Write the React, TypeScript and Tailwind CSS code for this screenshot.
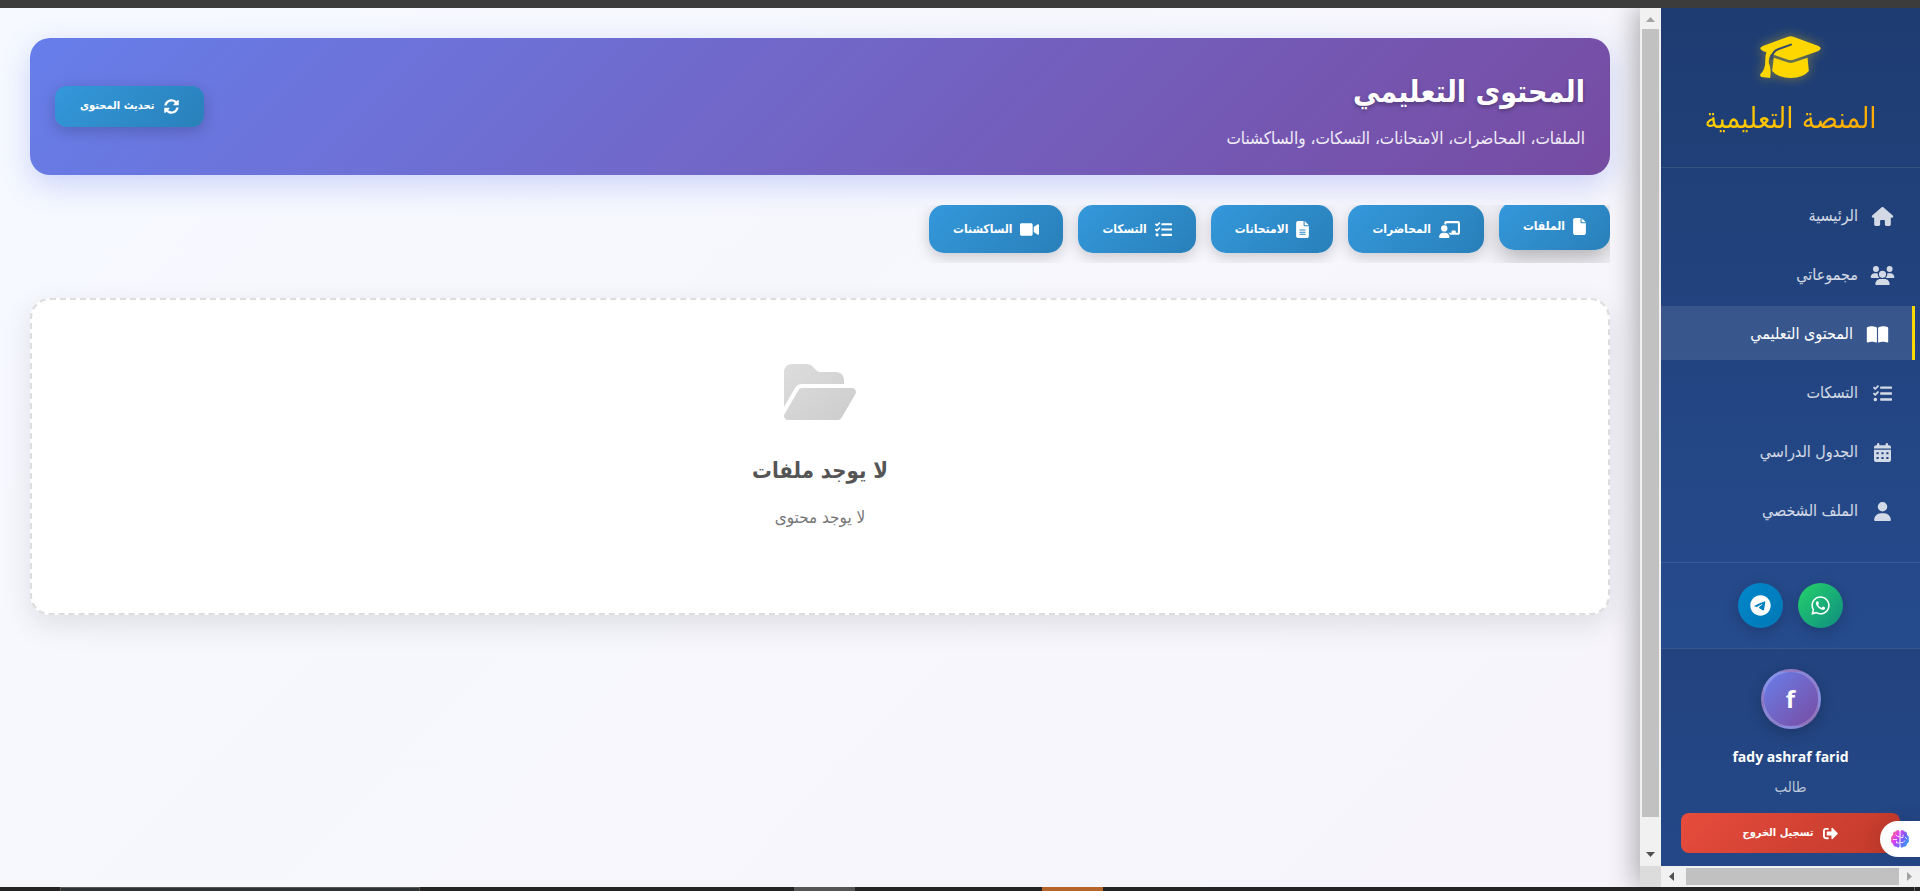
import React from 'react';
import type { IconType } from 'react-icons';
import { FaSignOutAlt, FaSyncAlt, FaTasks, FaVideo, FaWhatsapp } from 'react-icons/fa';
import {
  FaBookOpen,
  FaChalkboardUser,
  FaFile,
  FaFileLines,
  FaFolderOpen,
  FaHouse,
  FaTelegram,
  FaUser,
  FaUsers,
} from 'react-icons/fa6';
import { clsx } from 'clsx';

interface NavItem {
  label: string;
  icon: IconType | typeof CalendarIcon;
  active?: boolean;
}

interface Tab {
  label: string;
  icon: IconType;
  iconWidth: string;
  active?: boolean;
}

function CalendarIcon({ className }: { className?: string }) {
  return (
    <svg className={className} viewBox="0 0 17 19" fill="currentColor">
      <path d="M3 1.300a1.200 1.200 0 0 1 2.400 0V2.300H11.600V1.300a1.200 1.200 0 0 1 2.400 0V2.300h1a2 2 0 0 1 2 2V5.600H0V4.300a2 2 0 0 1 2-2h1Z" />
      <path
        fillRule="evenodd"
        d="M0 6.800H17V17a2 2 0 0 1-2 2H2a2 2 0 0 1-2-2ZM2.500 9.300v2h2.200v-2ZM7.400 9.300v2h2.200v-2ZM12.300 9.300v2h2.200v-2ZM2.500 14v2h2.200v-2ZM7.400 14v2h2.200v-2ZM12.300 14v2h2.200v-2Z"
      />
    </svg>
  );
}

function CapIcon() {
  return (
    <svg
      className="h-[42px] w-[61px] overflow-visible drop-shadow-[0_0_6px_rgba(255,215,0,0.4)]"
      viewBox="0 0 183 127"
      fill="#ffd700"
    >
      <path d="M84 2Q92-1 100 2L176 30Q190 37 176 45L100 72Q92 75 84 72L8 45Q-8 37 8 30Z" />
      <path d="M41 66L84 80Q92 83 100 80L143 66L147 106Q130 127 92 127Q54 127 36 106Z" />
      <path d="M20 44L36 50Q24 64 26 82Q34 100 30 127L4 124Q-2 122 0 116Q16 100 15 78Q15 58 20 44Z" />
      <path
        d="M93 26L54 40Q36 47 34 68"
        fill="none"
        stroke="#36496c"
        strokeWidth="6"
        strokeLinecap="round"
      />
    </svg>
  );
}

function BrainIcon() {
  return (
    <svg className="size-5" viewBox="0 0 20 20">
      <defs>
        <linearGradient id="brain" x1="0" y1="0.2" x2="1" y2="0.8">
          <stop offset="0" stopColor="#ff6a7a" />
          <stop offset="0.3" stopColor="#e040f0" />
          <stop offset="0.6" stopColor="#7a5cff" />
          <stop offset="1" stopColor="#2aa8ff" />
        </linearGradient>
      </defs>
      <path
        fill="url(#brain)"
        fillRule="evenodd"
        d="M9.500 2.500C9.500 1 6.500 .6 5.600 2.600 3.600 2.600 2.600 4.400 3 5.900 1.200 6.800 .6 9 1.400 10.500 .6 12.200 1.400 14.200 3 14.800 3.200 17 5 18 6.300 17.600 7.300 19.200 9.500 18.800 9.500 17.200ZM10.500 2.500C10.500 1 13.500 .6 14.400 2.600 16.400 2.600 17.400 4.400 17 5.900 18.800 6.800 19.400 9 18.600 10.500 19.400 12.200 18.600 14.200 17 14.800 16.800 17 15 18 13.700 17.600 12.700 19.200 10.500 18.800 10.500 17.200Z"
      />
      <path
        fill="none"
        stroke="#fff"
        strokeWidth="0.8"
        d="M9.500 7.500H7.500L5.500 5.500M3 10.500H7M9.500 14H6.500V12M10.500 8.500H13V5.500M15 8L17 10M10.500 13.500H13L15 11.500"
      />
    </svg>
  );
}

const navItems: NavItem[] = [
  { label: 'الرئيسية', icon: FaHouse },
  { label: 'مجموعاتي', icon: FaUsers },
  { label: 'المحتوى التعليمي', icon: FaBookOpen, active: true },
  { label: 'التسكات', icon: FaTasks },
  { label: 'الجدول الدراسي', icon: CalendarIcon },
  { label: 'الملف الشخصي', icon: FaUser },
];

const tabs: Tab[] = [
  { label: 'الملفات', icon: FaFile, iconWidth: 'w-[13px]', active: true },
  { label: 'المحاضرات', icon: FaChalkboardUser, iconWidth: 'w-[21px]' },
  { label: 'الامتحانات', icon: FaFileLines, iconWidth: 'w-[13px]' },
  { label: 'التسكات', icon: FaTasks, iconWidth: 'w-[17px]' },
  { label: 'الساكشنات', icon: FaVideo, iconWidth: 'w-[19px]' },
];

function Sidebar() {
  return (
    <aside className="relative z-10 flex w-[280px] shrink-0 flex-col shadow-[-5px_0_25px_rgba(0,0,0,0.3)]">
      <div className="flex min-h-0 flex-1">
        <div className="flex min-w-0 flex-1 flex-col overflow-hidden bg-linear-to-b from-[#1e3c72] to-[#295097]">
          {/* Brand */}
          <div className="flex h-40 shrink-0 flex-col items-center border-b border-white/10 pt-7">
            <CapIcon />
            <h2 className="mt-[18px] bg-linear-135 from-[#ffd700] to-[#ffa500] bg-clip-text text-[29px] leading-11 text-transparent">
              المنصة التعليمية
            </h2>
          </div>

          {/* Navigation */}
          <nav className="flex flex-col gap-[5px] pt-5 pb-[25px]">
            {navItems.map(({ label, icon: Icon, active }) => (
              <a
                key={label}
                href="#"
                className={clsx(
                  'flex h-[54px] items-center gap-3 pt-0.5 text-base',
                  active
                    ? 'ms-[5px] border-s-[3px] border-[#ffd700] bg-white/10 ps-[22px] font-medium text-white'
                    : 'ps-[25px] text-white/80'
                )}
              >
                <Icon className="h-[19px] w-[25px]" />
                <span>{label}</span>
              </a>
            ))}
          </nav>

          {/* Social links */}
          <div className="flex justify-center gap-[15px] border-t border-white/10 py-5">
            <a
              href="#"
              aria-label="WhatsApp"
              className="flex size-[45px] items-center justify-center rounded-full bg-linear-135 from-[#25d366] to-[#128c7e] text-white shadow-[0_4px_15px_rgba(0,0,0,0.2)]"
            >
              <FaWhatsapp className="size-[21px]" />
            </a>
            <a
              href="#"
              aria-label="Telegram"
              className="flex size-[45px] items-center justify-center rounded-full bg-linear-135 from-[#0088cc] to-[#0077b5] text-white shadow-[0_4px_15px_rgba(0,0,0,0.2)]"
            >
              <FaTelegram className="size-[21px]" />
            </a>
          </div>

          {/* Profile */}
          <div className="flex flex-1 flex-col items-center border-t border-white/10 bg-black/10 px-5 pt-5">
            <div className="flex size-[60px] items-center justify-center rounded-full border-[3px] border-white/20 bg-linear-135 from-[#667eea] to-[#764ba2] font-['Open_Sans'] text-2xl font-bold text-white shadow-[0_4px_15px_rgba(0,0,0,0.2)]">
              f
            </div>
            <p className="mt-4 font-['Open_Sans'] text-sm leading-6 font-bold text-white">fady ashraf farid</p>
            <p className="mt-1.5 text-[15px] leading-6 text-white/70">طالب</p>
            <button className="mt-3.5 flex h-10 w-full items-center justify-center gap-2.5 rounded-lg bg-linear-135 from-[#e74c3c] to-[#c0392b] text-[11px] font-bold text-white">
              <FaSignOutAlt className="size-[15px]" />
              تسجيل الخروج
            </button>
          </div>
        </div>

        {/* Vertical scrollbar */}
        <div className="flex w-[21px] shrink-0 flex-col bg-[#f1f1f1]">
          <svg className="size-[21px]" viewBox="0 0 21 21" fill="#a3a3a3">
            <path d="M6 14h9l-4.500-5z" />
          </svg>
          <div className="mx-0.5 flex-1 bg-[#c1c1c1]" />
          <div className="h-7" />
          <svg className="size-[21px]" viewBox="0 0 21 21" fill="#505050">
            <path d="M6 7h9l-4.500 5z" />
          </svg>
        </div>
      </div>

      {/* Horizontal scrollbar */}
      <div className="flex h-[21px] shrink-0 bg-[#f1f1f1]">
        <svg className="size-[21px]" viewBox="0 0 21 21" fill="#a3a3a3">
          <path d="M8 6v9l5-4.500z" />
        </svg>
        <div className="my-0.5 flex-1 bg-[#c1c1c1]" />
        <div className="w-1" />
        <svg className="size-[21px]" viewBox="0 0 21 21" fill="#505050">
          <path d="M13 6v9l-5-4.500z" />
        </svg>
        <div className="w-[21px] bg-[#dcdcdc]" />
      </div>

      {/* Floating assistant */}
      <button
        aria-label="Assistant"
        className="absolute right-0 bottom-[30px] flex h-9 w-10 items-center justify-center rounded-l-full bg-white shadow-[0_0_20px_rgba(0,0,0,0.12)]"
      >
        <BrainIcon />
      </button>
    </aside>
  );
}

function EmptyState() {
  return (
    <section className="flex flex-col items-center rounded-[20px] border-2 border-dashed border-[#ddd] bg-white px-10 pt-15 pb-20 shadow-[0_10px_30px_rgba(0,0,0,0.1)]">
      <svg width="0" height="0" className="absolute">
        <linearGradient id="folder" x1="0" y1="0" x2="1" y2="1">
          <stop offset="0" stopColor="#ddd" />
          <stop offset="1" stopColor="#ccc" />
        </linearGradient>
      </svg>
      <FaFolderOpen className="h-16 w-[72px] fill-[url(#folder)]" />
      <h3 className="mt-[27px] text-[22px] leading-10 font-bold text-[#555]">لا يوجد ملفات</h3>
      <p className="mt-2.5 text-[17px] leading-8 text-[#777]">لا يوجد محتوى</p>
    </section>
  );
}

export default function App() {
  return (
    <div
      dir="rtl"
      className="flex h-screen flex-col overflow-hidden bg-[#f8f7fc] font-['DejaVu_Sans_Condensed','DejaVu_Sans',sans-serif]"
    >
      <div className="h-2 shrink-0 bg-[#3c3c3c]" />

      <div className="flex min-h-0 flex-1 overflow-hidden">
        <Sidebar />

        <main className="min-w-0 flex-1 bg-linear-135 from-[#f6f9ff] to-[#f7f5fb] p-[30px]">
          {/* Page header */}
          <header className="flex h-[137px] items-center justify-between rounded-[20px] bg-linear-135 from-[#667eea] to-[#764ba2] px-[25px] text-white shadow-[0_10px_30px_rgba(102,126,234,0.3)]">
            <div>
              <h1 className="text-[30px] leading-14 font-bold [text-shadow:0_2px_4px_rgba(0,0,0,0.3)]">
                المحتوى التعليمي
              </h1>
              <p className="mt-1.5 text-[17px] leading-6 text-white/90">
                الملفات، المحاضرات، الامتحانات، التسكات، والساكشنات
              </p>
            </div>
            <button className="flex h-[41px] items-center gap-2.5 rounded-xl bg-linear-135 from-[#3498db] to-[#2980b9] px-[25px] text-[11px] font-bold shadow-[0_4px_15px_rgba(0,0,0,0.2)]">
              <FaSyncAlt className="size-[15px]" />
              تحديث المحتوى
            </button>
          </header>

          {/* Tabs */}
          <div className="mt-[30px] mb-[35px] flex gap-[15px] overflow-hidden pb-2.5">
            {tabs.map(({ label, icon: Icon, iconWidth, active }) => (
              <button
                key={label}
                className={clsx(
                  'flex h-12 items-center gap-2 rounded-[15px] bg-linear-135 from-[#3498db] to-[#2980b9] px-6 text-xs font-bold text-white',
                  active
                    ? '-translate-y-[3px] shadow-[0_8px_25px_rgba(0,0,0,0.3)]'
                    : 'shadow-[0_4px_15px_rgba(0,0,0,0.2)]'
                )}
              >
                <Icon className={clsx('h-[17px]', iconWidth)} />
                {label}
              </button>
            ))}
          </div>

          <EmptyState />
        </main>
      </div>

      {/* Taskbar edge */}
      <div dir="ltr" className="flex h-1 shrink-0 bg-[#242424]">
        <div className="ml-[60px] w-[360px] border border-b-0 border-[#555] bg-[#2e3131]" />
        <div className="ml-[374px] w-[61px] bg-[#555]" />
        <div className="ml-[187px] w-[61px] bg-[#b5652a]" />
        <div className="mr-[5px] ml-auto w-px bg-[#666]" />
      </div>
    </div>
  );
}
